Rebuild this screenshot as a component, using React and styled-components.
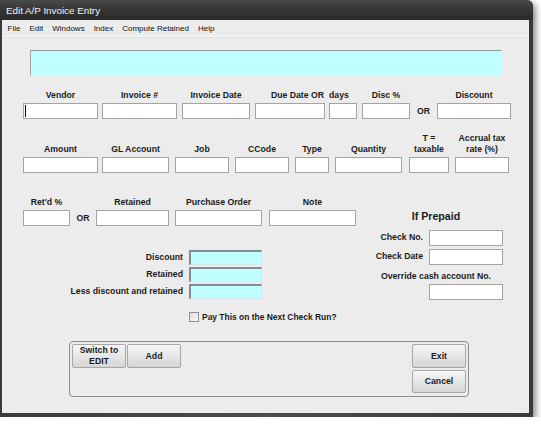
import React from "react";
import styled, { createGlobalStyle } from "styled-components";

const GlobalStyle = createGlobalStyle`
  html, body {
    margin: 0;
    padding: 0;
    background: #ffffff;
  }
  body {
    font-family: "Liberation Sans", Arial, sans-serif;
  }
`;

const Frame = styled.div`
  width: 533px;
  height: 417px;
  box-sizing: border-box;
  display: flex;
  flex-direction: column;
  padding: 0 4px 4px 2px;
  background: linear-gradient(90deg, #3a3a3a, #4c4c4c 50%, #3a3a3a);
  border-top-right-radius: 6px;
  box-shadow: 3px 3px 6px rgba(0, 0, 0, 0.45);
`;

const TitleBar = styled.div`
  height: 20px;
  margin: 0 -4px 0 -2px;
  padding-left: 6px;
  display: flex;
  align-items: center;
  color: #f2f2f2;
  font-size: 9.8px;
  border-top-right-radius: 6px;
  background: linear-gradient(#4a4a4a, #363636 45%, #2a2a2a);
`;

const Client = styled.div`
  flex: 1;
  display: flex;
  flex-direction: column;
  background: #ececec;
`;

const MenuBar = styled.div`
  height: 16px;
  display: flex;
  align-items: center;
  padding-left: 1px;
  border-bottom: 1px solid #fbfbfb;
  box-shadow: 0 1px 0 #dcdcdc;
`;

const MenuItem = styled.span`
  padding: 0 4.5px;
  font-size: 8px;
  color: #111;
`;

const Banner = styled.div`
  margin: 13px 0 0 28px;
  width: 472px;
  height: 26px;
  box-sizing: border-box;
  background: #c0ffff;
  border: 1px solid;
  border-color: #8c98a2 #e6f4f4 #e6f4f4 #9aa6ae;
`;

const Row = styled.div`
  display: flex;
  align-items: flex-end;
  margin-top: ${(p) => p.$mt || 0}px;
  padding-left: ${(p) => p.$pl || 0}px;
`;

const Field = styled.div`
  display: flex;
  flex-direction: column;
  width: ${(p) => p.$w}px;
  margin-left: ${(p) => p.$ml || 0}px;
`;

const Label = styled.div`
  font-size: 8.7px;
  font-weight: bold;
  line-height: 11px;
  padding-bottom: 2px;
  color: #1b1b1b;
  white-space: nowrap;
  text-align: ${(p) => p.$align || "center"};
  padding-right: ${(p) => p.$pr || 0}px;
`;

const Box = styled.div`
  position: relative;
  height: ${(p) => p.$h || 16}px;
  width: ${(p) => (p.$w ? `${p.$w}px` : "auto")};
  margin-left: ${(p) => p.$ml || 0}px;
  margin-top: ${(p) => p.$mt || 0}px;
  box-sizing: border-box;
  background: #ffffff;
  border: 1px solid #a3a3a3;
`;

const CyanBox = styled(Box)`
  background: #c0ffff;
  border-color: #7f8c94 #d4e6e6 #d4e6e6 #7f8c94;
  border-width: 2px 1px 1px 2px;
`;

const Caret = styled.span`
  position: absolute;
  left: 1px;
  top: 1px;
  width: 1px;
  height: 12px;
  background: #000;
`;

const OrText = styled.div`
  width: ${(p) => p.$w}px;
  line-height: 16px;
  text-align: center;
  font-size: 8.7px;
  font-weight: bold;
  color: #1b1b1b;
`;

const Lower = styled.div`
  display: flex;
  margin-top: 24px;
  padding-left: 21px;
`;

const LeftCol = styled.div`
  width: 333px;
  display: flex;
  flex-direction: column;
`;

const Totals = styled.div`
  display: grid;
  grid-template-columns: 160px 73px;
  column-gap: 6px;
  row-gap: 2px;
  align-items: center;
  margin-top: 24px;
`;

const TotalLabel = styled.div`
  text-align: right;
  font-size: 8.7px;
  font-weight: bold;
  color: #1b1b1b;
  padding-bottom: 2px;
`;

const CheckRow = styled.div`
  display: flex;
  align-items: center;
  margin: 13px 0 0 166px;
  font-size: 8.45px;
  font-weight: bold;
  color: #1b1b1b;
  white-space: nowrap;
`;

const CheckBox = styled.span`
  width: 10px;
  height: 10px;
  margin-right: 3px;
  box-sizing: border-box;
  border: 1px solid #8e8e8e;
  background: linear-gradient(135deg, #dcdcdc, #f8f8f8);
`;

const Prepaid = styled.div`
  width: 134px;
  margin-left: 13px;
  display: flex;
  flex-direction: column;
`;

const PrepaidTitle = styled.div`
  margin-top: 12px;
  line-height: 14px;
  text-align: center;
  font-size: 10.6px;
  font-weight: bold;
  color: #1b1b1b;
`;

const PrepaidRow = styled.div`
  display: grid;
  grid-template-columns: 54px 74px;
  column-gap: 6px;
  align-items: center;
  margin-top: ${(p) => p.$mt}px;
`;

const PrepaidNote = styled.div`
  margin-top: 6px;
  line-height: 11px;
  text-align: center;
  font-size: 8.7px;
  font-weight: bold;
  color: #1b1b1b;
`;

const Panel = styled.div`
  margin: 19px 0 0 67px;
  width: 400px;
  height: 56px;
  box-sizing: border-box;
  padding: 2px;
  display: flex;
  justify-content: space-between;
  align-items: flex-start;
  border: 1px solid #8c8c8c;
  border-radius: 4px;
`;

const ButtonGroup = styled.div`
  display: flex;
  flex-direction: ${(p) => (p.$stack ? "column" : "row")};
  gap: ${(p) => (p.$stack ? 2 : 1)}px;
`;

const Button = styled.button`
  width: 54px;
  height: ${(p) => (p.$short ? 23 : 24)}px;
  padding: 0;
  box-sizing: border-box;
  font-family: "Liberation Sans", Arial, sans-serif;
  font-size: 8.7px;
  font-weight: bold;
  line-height: 11px;
  color: #1b1b1b;
  background: linear-gradient(#f6f6f6, #e6e6e6 50%, #d6d6d6);
  border: 1px solid #a6a6a6;
  border-radius: 2px;
`;

const menus = ["File", "Edit", "Windows", "Index", "Compute Retained", "Help"];

const App = () => {
  return (
    <>
      <GlobalStyle />
      <Frame>
        <TitleBar>Edit A/P Invoice Entry</TitleBar>
        <Client>
          <MenuBar>
            {menus.map((m) => (
              <MenuItem key={m}>{m}</MenuItem>
            ))}
          </MenuBar>

          <Banner />

          <Row $mt={14} $pl={21}>
            <Field $w={75}>
              <Label>Vendor</Label>
              <Box>
                <Caret />
              </Box>
            </Field>
            <Field $w={75} $ml={4}>
              <Label>Invoice #</Label>
              <Box />
            </Field>
            <Field $w={68} $ml={5}>
              <Label>Invoice Date</Label>
              <Box />
            </Field>
            <Field $w={70} $ml={5}>
              <Label $align="right" $pr={1}>Due Date OR</Label>
              <Box />
            </Field>
            <Field $w={28} $ml={4}>
              <Label $align="left">days</Label>
              <Box />
            </Field>
            <Field $w={48} $ml={5}>
              <Label>Disc %</Label>
              <Box />
            </Field>
            <OrText $w={27}>OR</OrText>
            <Field $w={74}>
              <Label>Discount</Label>
              <Box />
            </Field>
          </Row>

          <Row $mt={14} $pl={21}>
            <Field $w={75}>
              <Label>Amount</Label>
              <Box />
            </Field>
            <Field $w={67} $ml={4}>
              <Label>GL Account</Label>
              <Box />
            </Field>
            <Field $w={54} $ml={6}>
              <Label>Job</Label>
              <Box />
            </Field>
            <Field $w={54} $ml={6}>
              <Label>CCode</Label>
              <Box />
            </Field>
            <Field $w={34} $ml={6}>
              <Label>Type</Label>
              <Box />
            </Field>
            <Field $w={67} $ml={6}>
              <Label>Quantity</Label>
              <Box />
            </Field>
            <Field $w={40} $ml={7}>
              <Label>
                T =
                <br />
                taxable
              </Label>
              <Box />
            </Field>
            <Field $w={54} $ml={6}>
              <Label>
                Accrual tax
                <br />
                rate (%)
              </Label>
              <Box />
            </Field>
          </Row>

          <Lower>
            <LeftCol>
              <Row>
                <Field $w={47}>
                  <Label>Ret'd %</Label>
                  <Box />
                </Field>
                <OrText $w={26}>OR</OrText>
                <Field $w={73}>
                  <Label>Retained</Label>
                  <Box />
                </Field>
                <Field $w={87} $ml={6}>
                  <Label>Purchase Order</Label>
                  <Box />
                </Field>
                <Field $w={87} $ml={7}>
                  <Label>Note</Label>
                  <Box />
                </Field>
              </Row>

              <Totals>
                <TotalLabel>Discount</TotalLabel>
                <CyanBox $h={15} />
                <TotalLabel>Retained</TotalLabel>
                <CyanBox $h={15} />
                <TotalLabel>Less discount and retained</TotalLabel>
                <CyanBox $h={15} />
              </Totals>

              <CheckRow>
                <CheckBox />
                Pay This on the Next Check Run?
              </CheckRow>
            </LeftCol>

            <Prepaid>
              <PrepaidTitle>If Prepaid</PrepaidTitle>
              <PrepaidRow $mt={7}>
                <TotalLabel>Check No.</TotalLabel>
                <Box />
              </PrepaidRow>
              <PrepaidRow $mt={3}>
                <TotalLabel>Check Date</TotalLabel>
                <Box />
              </PrepaidRow>
              <PrepaidNote>Override cash account No.</PrepaidNote>
              <Box $w={74} $ml={60} $mt={2} />
            </Prepaid>
          </Lower>

          <Panel>
            <ButtonGroup>
              <Button>
                Switch to
                <br />
                EDIT
              </Button>
              <Button>Add</Button>
            </ButtonGroup>
            <ButtonGroup $stack>
              <Button>Exit</Button>
              <Button $short>Cancel</Button>
            </ButtonGroup>
          </Panel>
        </Client>
      </Frame>
    </>
  );
};

export default App;
